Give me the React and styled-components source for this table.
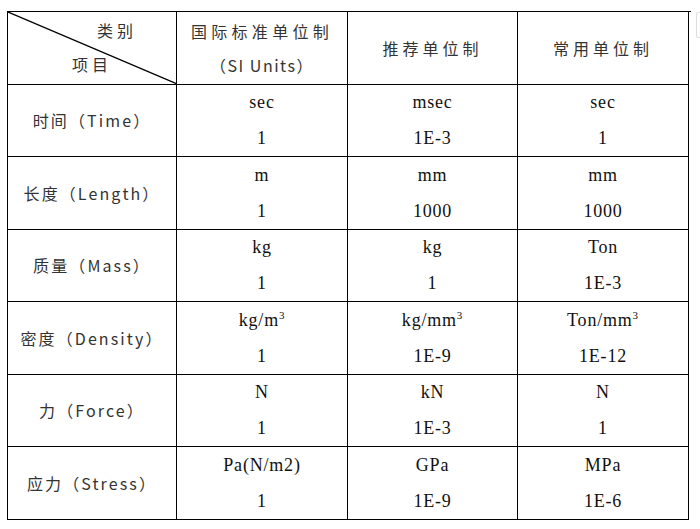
import React from 'react';
import styled, { createGlobalStyle } from 'styled-components';

const GlobalStyle = createGlobalStyle`
  html, body {
    margin: 0;
    padding: 0;
    background: #fff;
  }
`;

const Page = styled.div`
  position: relative;
  width: 700px;
  height: 529px;
  padding: 11px 0 0 7px;
  box-sizing: border-box;
`;

const Grid = styled.div`
  display: grid;
  grid-template-columns: 169px 171px 170px 171px;
  grid-template-rows: repeat(7, 72.5px);
  width: 683px;
  border-top: 1.5px solid #000;
  border-left: 1.5px solid #000;
`;

const Cell = styled.div`
  position: relative;
  display: flex;
  flex-direction: column;
  align-items: center;
  justify-content: center;
  border-right: 1.5px solid #000;
  border-bottom: 1.5px solid #000;
  box-sizing: border-box;
`;

const CjkText = styled.div`
  font-family: "Noto Sans CJK SC", sans-serif;
  font-size: 16px;
  color: #333;
  letter-spacing: ${(p) => p.$spacing || 3}px;
  line-height: ${(p) => p.$lh || 34}px;
  white-space: nowrap;
  padding-left: ${(p) => p.$indent || 0}px;
`;

const Diag = styled.svg`
  position: absolute;
  left: 0;
  top: 0;
  width: 100%;
  height: 100%;
`;

const Corner = styled.div`
  display: flex;
  flex-direction: column;
  align-items: flex-start;
  width: 100%;
  height: 100%;
  padding-top: 1px;
  box-sizing: border-box;
`;

const Value = styled.div`
  font-family: "Liberation Serif", "Times New Roman", serif;
  font-size: 18px;
  color: #111;
  letter-spacing: 0.8px;
  line-height: 36px;
  white-space: nowrap;
  sup {
    font-size: 11px;
    line-height: 0;
    vertical-align: 7px;
  }
`;

const Mark = styled.div`
  position: absolute;
  left: 696px;
  top: 12px;
  width: 10px;
  height: 24px;
  border: 1px solid #ddd;
  border-radius: 2px;
`;

const rows = [
  { label: '时间（Time）', v: [['sec', '1'], ['msec', '1E-3'], ['sec', '1']] },
  { label: '长度（Length）', v: [['m', '1'], ['mm', '1000'], ['mm', '1000']] },
  { label: '质量（Mass）', v: [['kg', '1'], ['kg', '1'], ['Ton', '1E-3']] },
  {
    label: '密度（Density）',
    v: [
      [<>kg/m<sup>3</sup></>, '1'],
      [<>kg/mm<sup>3</sup></>, '1E-9'],
      [<>Ton/mm<sup>3</sup></>, '1E-12'],
    ],
  },
  { label: '力（Force）', v: [['N', '1'], ['kN', '1E-3'], ['N', '1']] },
  { label: '应力（Stress）', v: [['Pa(N/m2)', '1'], ['GPa', '1E-9'], ['MPa', '1E-6']] },
];

const App = () => {
  return (
    <>
      <GlobalStyle />
      <Page>
        <Grid>
          <Cell>
            <Diag viewBox="0 0 169 72.5" preserveAspectRatio="none">
              <line x1="0" y1="0" x2="169" y2="72.5" stroke="#000" strokeWidth="1.3" />
            </Diag>
            <Corner>
              <CjkText $indent={89} $spacing={4}>类别</CjkText>
              <CjkText $indent={64} $spacing={4}>项目</CjkText>
            </Corner>
          </Cell>
          <Cell>
            <CjkText $spacing={4.3}>国际标准单位制</CjkText>
            <CjkText $spacing={1.5}>（SI Units）</CjkText>
          </Cell>
          <Cell>
            <CjkText $spacing={4}>推荐单位制</CjkText>
          </Cell>
          <Cell>
            <CjkText $spacing={4}>常用单位制</CjkText>
          </Cell>
          {rows.map((r) => (
            <React.Fragment key={r.label}>
              <Cell>
                <CjkText $spacing={2.1}>{r.label}</CjkText>
              </Cell>
              {r.v.map((pair, i) => (
                <Cell key={i}>
                  <Value>{pair[0]}</Value>
                  <Value>{pair[1]}</Value>
                </Cell>
              ))}
            </React.Fragment>
          ))}
        </Grid>
        <Mark />
      </Page>
    </>
  );
};

export default App;
